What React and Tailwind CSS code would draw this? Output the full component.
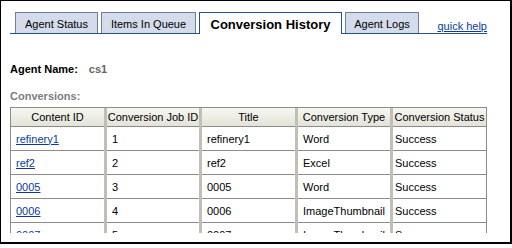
import React from "react";

const rows = [
    ["refinery1", "1", "refinery1", "Word", "Success"],
    ["ref2", "2", "ref2", "Excel", "Success"],
    ["0005", "3", "0005", "Word", "Success"],
    ["0006", "4", "0006", "ImageThumbnail", "Success"],
    ["0007", "5", "0007", "ImageThumbnail", "Success"],
];

const headers = ["Content ID", "Conversion Job ID", "Title", "Conversion Type", "Conversion Status"];

const App = () => {
    return (
        <div className="w-[512px] h-[244px] bg-white border-l border-t border-r-2 border-b-2 border-black overflow-hidden text-[11px] text-black font-['Liberation_Sans',Arial,sans-serif]">
            {/* Tabs */}
            <div className="mt-[11px] ml-[9px] w-[477px] h-[22px] flex items-end gap-[3px] pl-[5px] border-b border-[#21508f]">
                <div className="w-[83px] h-[21px] border border-b-0 border-[#6e7f9c] bg-[#d4dbea] pt-[4px] leading-[14px] text-center">Agent Status</div>
                <div className="w-[95px] h-[21px] border border-b-0 border-[#6e7f9c] bg-[#d4dbea] pt-[4px] leading-[14px] text-center">Items In Queue</div>
                <div className="w-[143px] h-[22px] -mb-px border border-b-0 border-[#21508f] bg-white pt-[4px] leading-[16px] text-[13px] font-bold text-center">Conversion History</div>
                <div className="w-[74px] h-[21px] border border-b-0 border-[#6e7f9c] bg-[#d4dbea] pt-[4px] leading-[14px] text-center">Agent Logs</div>
                <a href="#" className="ml-auto leading-[14px] text-[#0a3a9e] underline">quick help</a>
            </div>

            {/* Agent name */}
            <div className="mt-[28px] ml-[9px] leading-[14px] font-bold">
                Agent Name:<span className="ml-[11px] text-[#666666]">cs1</span>
            </div>

            {/* Conversions */}
            <div className="mt-[13px] ml-[9px] leading-[14px] font-bold text-[#7d7d7d]">Conversions:</div>

            <div className="mt-[4px] ml-[9px] w-[477px] h-[126px] overflow-hidden border-t border-[#8c8c8c]">
                <div className="grid grid-cols-[93px_92px_93px_92px_93px] gap-x-[3px] bg-[#bfbfb7] border-x border-[#8c8c8c]">
                    {headers.map((h) => (
                        <div key={h} className="h-[19px] border-b border-[#8c8c8c] bg-gradient-to-b from-[#f7f7f2] to-[#e4e3d8] flex items-center justify-center leading-[14px] whitespace-nowrap">
                            {h}
                        </div>
                    ))}
                    {rows.map((r) =>
                        r.map((c, i) => (
                            <div
                                key={r[0] + i}
                                className={`h-[24px] border-b border-[#8c8c8c] bg-white flex items-center leading-[14px] whitespace-nowrap ${i === 4 ? "pl-[2px]" : "pl-[5px]"}`}
                            >
                                {i === 0 ? (
                                    <a href="#" className="text-[#0a3a9e] underline">{c}</a>
                                ) : (
                                    c
                                )}
                            </div>
                        ))
                    )}
                </div>
            </div>
        </div>
    );
};

export default App;
